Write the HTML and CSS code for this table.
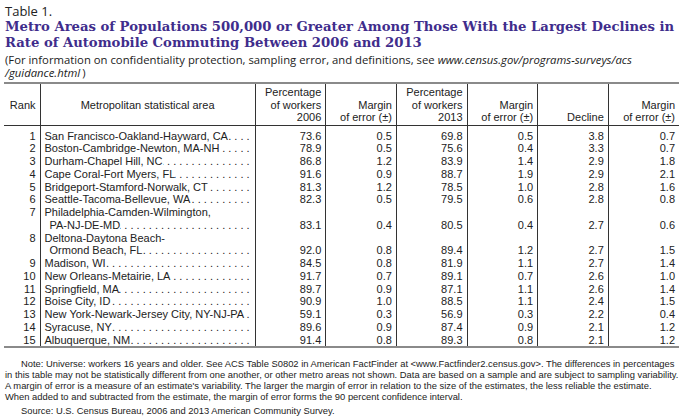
FILE: index.html
```html
<!DOCTYPE html>
<html>
<head>
<meta charset="utf-8">
<link rel="stylesheet" href="styles.css">
</head>
<body>
<div class="page">
  <div class="label">Table 1.</div>
  <h1 class="title">Metro Areas of Populations 500,000 or Greater Among Those With the Largest Declines in<br>Rate of Automobile Commuting Between 2006 and 2013</h1>
  <p class="sub">(For information on confidentiality protection, sampling error, and definitions, see <i>www.census.gov/programs-surveys/acs</i><br><i class="link2">/guidance.html</i><span class="paren">)</span></p>
  <table class="data">
    <colgroup>
      <col class="c-rank"><col class="c-area"><col class="c-num"><col class="c-num"><col class="c-num"><col class="c-num"><col class="c-num"><col class="c-num">
    </colgroup>
    <thead>
      <tr>
        <th class="h-mid">Rank</th>
        <th class="h-mid h-center">Metropolitan statistical area</th>
        <th>Percentage<br>of workers<br>2006</th>
        <th>Margin<br>of error (±)</th>
        <th>Percentage<br>of workers<br>2013</th>
        <th>Margin<br>of error (±)</th>
        <th>Decline</th>
        <th>Margin<br>of error (±)</th>
      </tr>
    </thead>
    <tbody>
      <tr class="first"><td class="rank">1</td><td class="area"><div class="lead"><span>San Francisco-Oakland-Hayward, CA</span><span class="dots"></span></div></td><td>73.6</td><td>0.5</td><td>69.8</td><td>0.5</td><td>3.8</td><td>0.7</td></tr>
      <tr><td class="rank">2</td><td class="area"><div class="lead"><span>Boston-Cambridge-Newton, MA-NH</span><span class="dots"></span></div></td><td>78.9</td><td>0.5</td><td>75.6</td><td>0.4</td><td>3.3</td><td>0.7</td></tr>
      <tr><td class="rank">3</td><td class="area"><div class="lead"><span>Durham-Chapel Hill, NC</span><span class="dots"></span></div></td><td>86.8</td><td>1.2</td><td>83.9</td><td>1.4</td><td>2.9</td><td>1.8</td></tr>
      <tr><td class="rank">4</td><td class="area"><div class="lead"><span>Cape Coral-Fort Myers, FL</span><span class="dots"></span></div></td><td>91.6</td><td>0.9</td><td>88.7</td><td>1.9</td><td>2.9</td><td>2.1</td></tr>
      <tr><td class="rank">5</td><td class="area"><div class="lead"><span>Bridgeport-Stamford-Norwalk, CT</span><span class="dots"></span></div></td><td>81.3</td><td>1.2</td><td>78.5</td><td>1.0</td><td>2.8</td><td>1.6</td></tr>
      <tr><td class="rank">6</td><td class="area"><div class="lead"><span>Seattle-Tacoma-Bellevue, WA</span><span class="dots"></span></div></td><td>82.3</td><td>0.5</td><td>79.5</td><td>0.6</td><td>2.8</td><td>0.8</td></tr>
      <tr><td class="rank">7</td><td class="area"><div>Philadelphia-Camden-Wilmington,</div><div class="lead indent"><span>PA-NJ-DE-MD</span><span class="dots"></span></div></td><td>83.1</td><td>0.4</td><td>80.5</td><td>0.4</td><td>2.7</td><td>0.6</td></tr>
      <tr><td class="rank">8</td><td class="area"><div>Deltona-Daytona Beach-</div><div class="lead indent"><span>Ormond Beach, FL</span><span class="dots"></span></div></td><td>92.0</td><td>0.8</td><td>89.4</td><td>1.2</td><td>2.7</td><td>1.5</td></tr>
      <tr><td class="rank">9</td><td class="area"><div class="lead"><span>Madison, WI</span><span class="dots"></span></div></td><td>84.5</td><td>0.8</td><td>81.9</td><td>1.1</td><td>2.7</td><td>1.4</td></tr>
      <tr><td class="rank">10</td><td class="area"><div class="lead"><span>New Orleans-Metairie, LA</span><span class="dots"></span></div></td><td>91.7</td><td>0.7</td><td>89.1</td><td>0.7</td><td>2.6</td><td>1.0</td></tr>
      <tr><td class="rank">11</td><td class="area"><div class="lead"><span>Springfield, MA</span><span class="dots"></span></div></td><td>89.7</td><td>0.9</td><td>87.1</td><td>1.1</td><td>2.6</td><td>1.4</td></tr>
      <tr><td class="rank">12</td><td class="area"><div class="lead"><span>Boise City, ID</span><span class="dots"></span></div></td><td>90.9</td><td>1.0</td><td>88.5</td><td>1.1</td><td>2.4</td><td>1.5</td></tr>
      <tr><td class="rank">13</td><td class="area"><div class="lead"><span>New York-Newark-Jersey City, NY-NJ-PA</span><span class="dots"></span></div></td><td>59.1</td><td>0.3</td><td>56.9</td><td>0.3</td><td>2.2</td><td>0.4</td></tr>
      <tr><td class="rank">14</td><td class="area"><div class="lead"><span>Syracuse, NY</span><span class="dots"></span></div></td><td>89.6</td><td>0.9</td><td>87.4</td><td>0.9</td><td>2.1</td><td>1.2</td></tr>
      <tr class="last"><td class="rank">15</td><td class="area"><div class="lead"><span>Albuquerque, NM</span><span class="dots"></span></div></td><td>91.4</td><td>0.8</td><td>89.3</td><td>0.8</td><td>2.1</td><td>1.2</td></tr>
    </tbody>
  </table>
  <div class="notes">
    <p class="note">Note: Universe: workers 16 years and older. See ACS Table S0802 in American FactFinder at &lt;www.Factfinder2.census.gov&gt;. The differences in percentages<br>in this table may not be statistically different from one another, or other metro areas not shown. Data are based on a sample and are subject to sampling variability.<br>A margin of error is a measure of an estimate's variability. The larger the margin of error in relation to the size of the estimates, the less reliable the estimate.<br>When added to and subtracted from the estimate, the margin of error forms the 90 percent confidence interval.</p>
    <p class="source">Source: U.S. Census Bureau, 2006 and 2013 American Community Survey.</p>
  </div>
</div>
</body>
</html>
```

FILE: styles.css
```css
html, body {
  margin: 0;
  padding: 0;
  background: #fff;
}
.page {
  width: 685px;
  padding: 4px 0 0 5px;
  color: #1a1a1a;
}
.label {
  font-family: "Open Sans", "Liberation Sans", sans-serif;
  font-size: 13px;
  line-height: 15px;
  color: #222;
}
.title {
  margin: 0;
  font-family: "DejaVu Serif", serif;
  font-weight: bold;
  font-size: 13.2px;
  line-height: 16px;
  color: #3f2d8c;
  white-space: nowrap;
}
.sub {
  margin: 2px 0 0 0;
  font-family: "Open Sans", "Liberation Sans", sans-serif;
  font-size: 11.3px;
  line-height: 13px;
  color: #222;
}
.paren {
  display: inline-block;
  margin-left: 2px;
}
.data {
  margin: 3px 0 0 -1px;
  border-collapse: collapse;
  table-layout: fixed;
  width: 675px;
  font-family: "Liberation Sans", Arial, sans-serif;
  font-size: 11px;
  color: #222;
  border-top: 2px solid #8a8a8a;
  border-bottom: 2px solid #8a8a8a;
}
.c-rank { width: 36px; }
.c-area { width: 215px; }
.c-num { width: 70.6px; }
th {
  font-weight: normal;
  text-align: right;
  vertical-align: bottom;
  line-height: 12.5px;
  padding: 2px 4px 1px 4px;
  border-left: 1px solid #333;
  border-bottom: 1px solid #333;
}
th:first-child { border-left: none; }
th.h-mid { vertical-align: middle; }
th.h-center { text-align: center; }
td {
  text-align: right;
  vertical-align: bottom;
  line-height: 12.75px;
  padding: 0 4px;
  border-left: 1px solid #333;
  white-space: nowrap;
}
td:first-child { border-left: none; }
tr.first td { padding-top: 4px; }
tr.last td { padding-bottom: 0; }
td.rank { vertical-align: top; }
td.area { text-align: left; padding-right: 5px; }
.lead {
  display: flex;
}
.lead span:first-child { flex: none; }
.dots {
  flex: 1;
  overflow: hidden;
  white-space: nowrap;
  direction: rtl;
  text-align: right;
}
.dots::before {
  content: ". . . . . . . . . . . . . . . . . . . . . . . . . . . . . . . . . . . . . . . . . . . . . . . . . . . . . . . . . . . . . . . .";
}
.indent { padding-left: 5px; }
.notes {
  margin-top: 11px;
  font-family: "Liberation Sans", Arial, sans-serif;
  font-size: 9.4px;
  line-height: 10.9px;
  color: #222;
  white-space: nowrap;
}
.note {
  margin: 0;
  text-indent: 16px;
}
.source {
  margin: 3px 0 0 0;
  text-indent: 16px;
}
```
